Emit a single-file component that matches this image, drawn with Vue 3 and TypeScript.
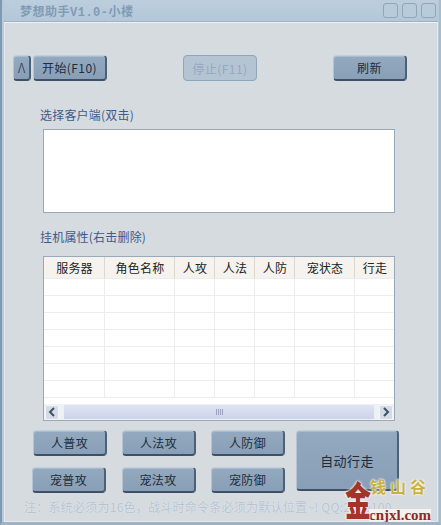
<script setup lang="ts">
const columns = [
  { name: '服务器', width: 61 },
  { name: '角色名称', width: 70 },
  { name: '人攻', width: 40 },
  { name: '人法', width: 40 },
  { name: '人防', width: 40 },
  { name: '宠状态', width: 60 },
  { name: '行走', width: 39 }
]
const rows = [1, 2, 3, 4, 5, 6, 7]
const buttonRows = [
  ['人普攻', '人法攻', '人防御'],
  ['宠普攻', '宠法攻', '宠防御']
]
</script>

<template>
  <div class="window">
    <div class="titlebar">
      <span class="title">梦想助手V1.0-小楼</span>
      <div class="win-btns">
        <span class="win-btn"></span>
        <span class="win-btn"></span>
        <span class="win-btn"></span>
      </div>
    </div>

    <div class="content">
      <div class="toolbar">
        <div class="tool-left">
          <button class="btn btn-up">Λ</button>
          <button class="btn btn-wide">开始(F10)</button>
        </div>
        <button class="btn btn-wide disabled">停止(F11)</button>
        <button class="btn btn-wide">刷新</button>
      </div>

      <div class="label label-first">选择客户端(双击)</div>
      <div class="listbox"></div>

      <div class="label label-second">挂机属性(右击删除)</div>
      <div class="table">
        <div class="thead">
          <div
            v-for="col in columns"
            :key="col.name"
            class="th"
            :style="{ width: col.width + 'px' }"
          >{{ col.name }}</div>
        </div>
        <div class="tbody">
          <div v-for="r in rows" :key="r" class="tr">
            <div
              v-for="col in columns"
              :key="col.name"
              class="td"
              :style="{ width: col.width + 'px' }"
            ></div>
          </div>
        </div>
        <div class="scrollbar">
          <span class="arrow">
            <svg width="8" height="10" viewBox="0 0 8 10"><path d="M6 1 L2 5 L6 9" fill="none" stroke="#3f5166" stroke-width="2" /></svg>
          </span>
          <span class="thumb"><i></i><i></i><i></i><i></i></span>
          <span class="arrow">
            <svg width="8" height="10" viewBox="0 0 8 10"><path d="M2 1 L6 5 L2 9" fill="none" stroke="#3f5166" stroke-width="2" /></svg>
          </span>
        </div>
      </div>

      <div class="actions">
        <div class="action-rows">
          <div v-for="(row, i) in buttonRows" :key="i" class="action-row" :class="{ shifted: i === 1 }">
            <button v-for="b in row" :key="b" class="btn btn-wide">{{ b }}</button>
          </div>
        </div>
        <button class="btn btn-auto">自动行走</button>
      </div>

      <div class="note">注：系统必须为16色，战斗时命令条必须为默认位置~! QQ:2576100</div>
    </div>

    <div class="watermark">
      <span class="wm-jin">金</span>
      <span class="wm-right">
        <span class="wm-cn">钱山谷</span>
        <span class="wm-url">cnjxl.com</span>
      </span>
    </div>
  </div>
</template>

<style scoped>
.window {
  position: relative;
  width: 441px;
  height: 525px;
  box-sizing: border-box;
  display: flex;
  flex-direction: column;
  padding: 0 1px 0 2px;
  background: #b8cad9;
  border-left: 2px solid #7d99b3;
  border-right: 2px solid #a9bccb;
  border-bottom: 3px solid #9fb3c5;
  font-family: "Noto Sans CJK SC", "Liberation Sans", sans-serif;
  overflow: hidden;
}

.titlebar {
  height: 21px;
  flex: none;
  display: flex;
  align-items: center;
  justify-content: space-between;
  padding: 0 2px 0 16px;
  background: linear-gradient(#bccede, #b3c7d8);
  border-bottom: 1px solid #9fb2c4;
}

.title {
  font-family: "Liberation Mono", "Noto Sans CJK SC", monospace;
  font-size: 12px;
  font-weight: 700;
  letter-spacing: 0.5px;
  color: #7f9cb6;
}

.win-btns {
  display: flex;
  gap: 4px;
}

.win-btn {
  box-sizing: border-box;
  width: 15px;
  height: 15px;
  border: 1px solid #8fa5b9;
  border-radius: 3px;
  background: #b8cbdb;
}

.content {
  flex: 1;
  background: #d6dbdf;
  border: 1px solid #e6eaec;
  border-top: 1px solid #eef1f2;
  padding: 32px 0 0 8px;
  display: flex;
  flex-direction: column;
  min-height: 0;
}

.toolbar {
  display: flex;
  align-items: center;
  width: 394px;
  justify-content: space-between;
}

.tool-left {
  display: flex;
  gap: 2px;
}

.btn {
  box-sizing: border-box;
  height: 26px;
  padding: 0;
  font-family: "Noto Sans CJK SC", "Liberation Sans", sans-serif;
  font-size: 12px;
  letter-spacing: 0.4px;
  color: #1f2c3a;
  background: linear-gradient(#93a9bf, #889fb7);
  border: 1px solid #7d94ab;
  border-top-color: #c0cedb;
  border-left-color: #b3c3d2;
  border-right: 2px solid #4c6076;
  border-bottom: 2px solid #3e5065;
  border-radius: 4px;
  box-shadow: inset 0 1px 0 #a9bccd;
}

.btn-up {
  width: 18px;
  font-size: 13px;
  font-weight: 300;
  letter-spacing: 0;
}

.btn-wide {
  width: 74px;
}

.disabled {
  background: #b4c4d3;
  border: 1px solid #8fa5ba;
  box-shadow: none;
  color: #93a9bf;
}

.label {
  font-size: 12px;
  line-height: 16px;
  letter-spacing: 0.2px;
  color: #3d5a8c;
  margin-left: 27px;
}

.label-first {
  margin-top: 26px;
}

.label-second {
  margin-top: 16px;
}

.listbox {
  box-sizing: border-box;
  width: 352px;
  height: 84px;
  margin: 6px 0 0 30px;
  background: #fff;
  border: 1px solid #9aa9b8;
}

.table {
  box-sizing: border-box;
  width: 352px;
  height: 165px;
  margin: 11px 0 0 30px;
  background: #fff;
  border: 1px solid #9aa9b8;
  display: flex;
  flex-direction: column;
}

.thead {
  display: flex;
  height: 21px;
  flex: none;
  background: #f6f3ee;
  border-bottom: 1px solid #ececec;
}

.th {
  box-sizing: border-box;
  flex: none;
  padding-left: 1px;
  font-size: 12px;
  line-height: 21px;
  letter-spacing: 0.2px;
  text-align: center;
  color: #222;
  border-right: 1px solid #dcd8d0;
}

.th:last-child {
  border-right: none;
}

.tbody {
  flex: 1;
  overflow: hidden;
}

.tr {
  display: flex;
  height: 17px;
  box-sizing: border-box;
  border-bottom: 1px solid #ededed;
}

.td {
  box-sizing: border-box;
  flex: none;
  border-right: 1px solid #ededed;
}

.td:last-child {
  border-right: none;
}

.scrollbar {
  flex: none;
  height: 16px;
  display: flex;
  align-items: center;
  gap: 2px;
  padding: 0 1px;
  background: #eef1f6;
}

.arrow {
  width: 14px;
  height: 15px;
  display: flex;
  align-items: center;
  justify-content: center;
  background: #d5dce6;
  border: 1px solid #f3f5f9;
  box-sizing: border-box;
  border-radius: 2px;
}

.thumb {
  flex: 1;
  height: 14px;
  display: flex;
  align-items: center;
  justify-content: center;
  gap: 1px;
  margin: 0 2px;
  background: linear-gradient(#dfe3f3, #ccd3ea);
  border: 1px solid #eef0f8;
  border-radius: 2px;
}

.thumb i {
  width: 1px;
  height: 6px;
  background: #9aa3bd;
}

.actions {
  display: flex;
  margin: 9px 0 0 20px;
  gap: 11px;
}

.action-rows {
  display: flex;
  flex-direction: column;
  gap: 11px;
  width: 252px;
}

.action-row {
  display: flex;
  justify-content: space-between;
}

.action-row.shifted {
  margin-left: -1px;
  width: 253px;
}

.action-row .btn {
  width: 74px;
}

.btn-auto {
  width: 103px;
  height: 61px;
  font-size: 13px;
}

.note {
  margin: 6px 0 0 11px;
  font-size: 12px;
  line-height: 16px;
  letter-spacing: 0.25px;
  color: #b5c4d2;
  text-shadow: 0 0 1px #eef2f5;
  white-space: nowrap;
}

.watermark {
  position: absolute;
  left: 343px;
  top: 476px;
  display: flex;
  align-items: flex-end;
}

.wm-jin {
  display: inline-block;
  align-self: flex-start;
  font-family: "Noto Sans CJK SC", serif;
  font-weight: 900;
  font-size: 26px;
  line-height: 44px;
  color: #a5332a;
  text-shadow: 0 0 2px #fff, 0 0 2px #fff;
  transform: scaleY(1.5);
}

.wm-right {
  display: flex;
  flex-direction: column;
  align-items: center;
  margin-left: -2px;
}

.wm-cn {
  font-size: 16px;
  line-height: 20px;
  letter-spacing: 4px;
  font-weight: 700;
  color: #c9b23c;
  text-shadow: 0 0 2px #fff, 0 0 2px #fff;
  margin-bottom: 13px;
}

.wm-url {
  font-family: "Liberation Serif", serif;
  font-size: 15px;
  font-weight: 700;
  line-height: 13px;
  color: #8c2a22;
  background: #f4f1ef;
}
</style>
